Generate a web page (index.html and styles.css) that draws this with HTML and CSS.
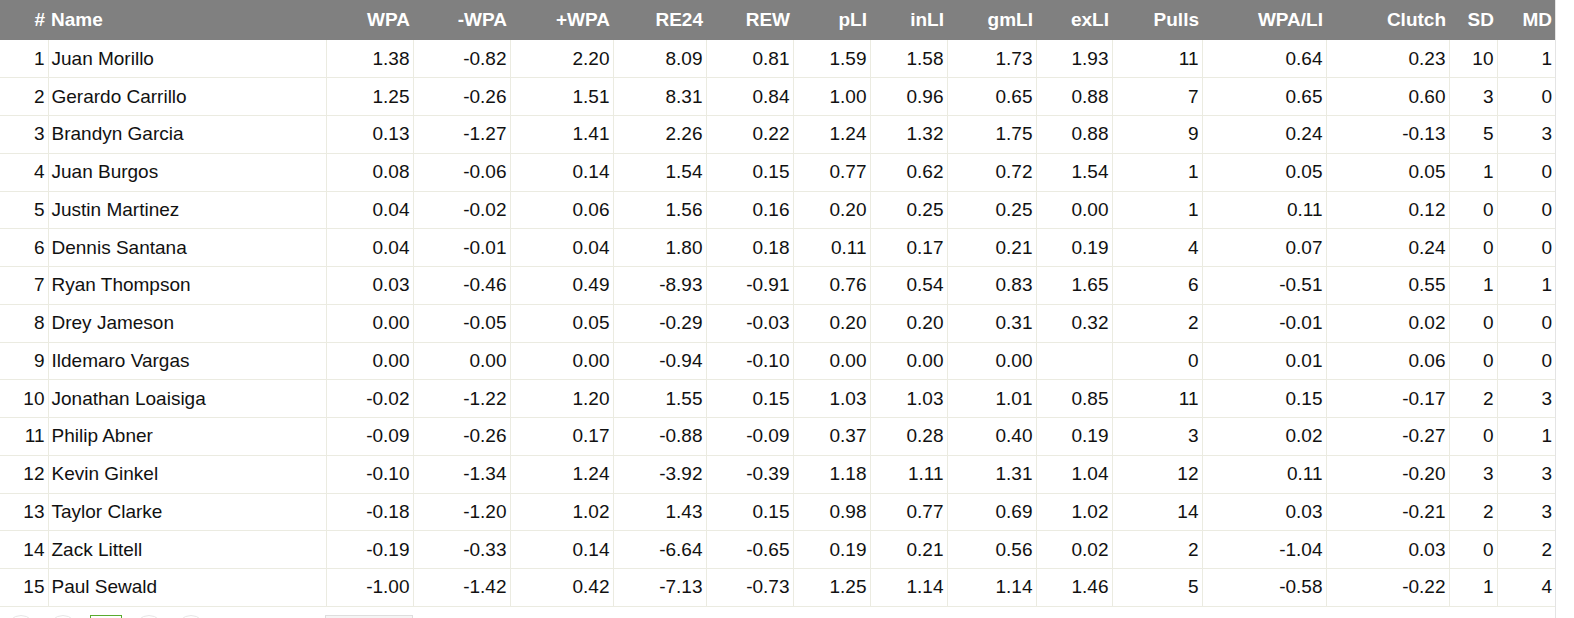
FILE: index.html
```html
<!DOCTYPE html>
<html lang="en">
<head>
<meta charset="utf-8">
<title>WPA table</title>
<link rel="stylesheet" href="styles.css">
</head>
<body>
<div class="wrap">
<table class="stats">
<colgroup>
<col style="width:48px"><col style="width:278px"><col style="width:87px"><col style="width:97px"><col style="width:103px"><col style="width:93px"><col style="width:87px"><col style="width:77px"><col style="width:77px"><col style="width:89px"><col style="width:76px"><col style="width:90px"><col style="width:124px"><col style="width:123px"><col style="width:48px"><col style="width:58px">
</colgroup>
<thead>
<tr><th>#</th><th class="name">Name</th><th>WPA</th><th>-WPA</th><th>+WPA</th><th>RE24</th><th>REW</th><th>pLI</th><th>inLI</th><th>gmLI</th><th>exLI</th><th>Pulls</th><th>WPA/LI</th><th>Clutch</th><th>SD</th><th>MD</th></tr>
</thead>
<tbody>
<tr><td>1</td><td class="name">Juan Morillo</td><td>1.38</td><td>-0.82</td><td>2.20</td><td>8.09</td><td>0.81</td><td>1.59</td><td>1.58</td><td>1.73</td><td>1.93</td><td>11</td><td>0.64</td><td>0.23</td><td>10</td><td>1</td></tr>
<tr><td>2</td><td class="name">Gerardo Carrillo</td><td>1.25</td><td>-0.26</td><td>1.51</td><td>8.31</td><td>0.84</td><td>1.00</td><td>0.96</td><td>0.65</td><td>0.88</td><td>7</td><td>0.65</td><td>0.60</td><td>3</td><td>0</td></tr>
<tr><td>3</td><td class="name">Brandyn Garcia</td><td>0.13</td><td>-1.27</td><td>1.41</td><td>2.26</td><td>0.22</td><td>1.24</td><td>1.32</td><td>1.75</td><td>0.88</td><td>9</td><td>0.24</td><td>-0.13</td><td>5</td><td>3</td></tr>
<tr><td>4</td><td class="name">Juan Burgos</td><td>0.08</td><td>-0.06</td><td>0.14</td><td>1.54</td><td>0.15</td><td>0.77</td><td>0.62</td><td>0.72</td><td>1.54</td><td>1</td><td>0.05</td><td>0.05</td><td>1</td><td>0</td></tr>
<tr><td>5</td><td class="name">Justin Martinez</td><td>0.04</td><td>-0.02</td><td>0.06</td><td>1.56</td><td>0.16</td><td>0.20</td><td>0.25</td><td>0.25</td><td>0.00</td><td>1</td><td>0.11</td><td>0.12</td><td>0</td><td>0</td></tr>
<tr><td>6</td><td class="name">Dennis Santana</td><td>0.04</td><td>-0.01</td><td>0.04</td><td>1.80</td><td>0.18</td><td>0.11</td><td>0.17</td><td>0.21</td><td>0.19</td><td>4</td><td>0.07</td><td>0.24</td><td>0</td><td>0</td></tr>
<tr><td>7</td><td class="name">Ryan Thompson</td><td>0.03</td><td>-0.46</td><td>0.49</td><td>-8.93</td><td>-0.91</td><td>0.76</td><td>0.54</td><td>0.83</td><td>1.65</td><td>6</td><td>-0.51</td><td>0.55</td><td>1</td><td>1</td></tr>
<tr><td>8</td><td class="name">Drey Jameson</td><td>0.00</td><td>-0.05</td><td>0.05</td><td>-0.29</td><td>-0.03</td><td>0.20</td><td>0.20</td><td>0.31</td><td>0.32</td><td>2</td><td>-0.01</td><td>0.02</td><td>0</td><td>0</td></tr>
<tr><td>9</td><td class="name">Ildemaro Vargas</td><td>0.00</td><td>0.00</td><td>0.00</td><td>-0.94</td><td>-0.10</td><td>0.00</td><td>0.00</td><td>0.00</td><td></td><td>0</td><td>0.01</td><td>0.06</td><td>0</td><td>0</td></tr>
<tr><td>10</td><td class="name">Jonathan Loaisiga</td><td>-0.02</td><td>-1.22</td><td>1.20</td><td>1.55</td><td>0.15</td><td>1.03</td><td>1.03</td><td>1.01</td><td>0.85</td><td>11</td><td>0.15</td><td>-0.17</td><td>2</td><td>3</td></tr>
<tr><td>11</td><td class="name">Philip Abner</td><td>-0.09</td><td>-0.26</td><td>0.17</td><td>-0.88</td><td>-0.09</td><td>0.37</td><td>0.28</td><td>0.40</td><td>0.19</td><td>3</td><td>0.02</td><td>-0.27</td><td>0</td><td>1</td></tr>
<tr><td>12</td><td class="name">Kevin Ginkel</td><td>-0.10</td><td>-1.34</td><td>1.24</td><td>-3.92</td><td>-0.39</td><td>1.18</td><td>1.11</td><td>1.31</td><td>1.04</td><td>12</td><td>0.11</td><td>-0.20</td><td>3</td><td>3</td></tr>
<tr><td>13</td><td class="name">Taylor Clarke</td><td>-0.18</td><td>-1.20</td><td>1.02</td><td>1.43</td><td>0.15</td><td>0.98</td><td>0.77</td><td>0.69</td><td>1.02</td><td>14</td><td>0.03</td><td>-0.21</td><td>2</td><td>3</td></tr>
<tr><td>14</td><td class="name">Zack Littell</td><td>-0.19</td><td>-0.33</td><td>0.14</td><td>-6.64</td><td>-0.65</td><td>0.19</td><td>0.21</td><td>0.56</td><td>0.02</td><td>2</td><td>-1.04</td><td>0.03</td><td>0</td><td>2</td></tr>
<tr><td>15</td><td class="name">Paul Sewald</td><td>-1.00</td><td>-1.42</td><td>0.42</td><td>-7.13</td><td>-0.73</td><td>1.25</td><td>1.14</td><td>1.14</td><td>1.46</td><td>5</td><td>-0.58</td><td>-0.22</td><td>1</td><td>4</td></tr>
</tbody>
</table>
<div class="pager">
<span class="pbtn"></span>
<span class="pbtn"></span>
<span class="pbtn current"></span>
<span class="pbtn"></span>
<span class="pbtn"></span>
<span class="psize"></span>
</div>
</div>
</body>
</html>
```
FILE: styles.css
```css
html, body {
  margin: 0;
  padding: 0;
  background: #ffffff;
}

body {
  font-family: "Liberation Sans", Arial, Helvetica, sans-serif;
  color: #111111;
}

.wrap {
  width: 1555px;
  border-right: 1px solid #e4e4e4;
  min-height: 618px;
}

.stats {
  table-layout: fixed;
  width: 1555px;
  border-collapse: collapse;
  font-size: 19px;
}

.stats th {
  background: #808080;
  color: #ffffff;
  font-weight: bold;
  height: 40px;
  padding: 0 3px;
  text-align: right;
  white-space: nowrap;
  vertical-align: middle;
  box-sizing: border-box;
}

.stats td {
  height: 37.75px;
  padding: 0 3px;
  text-align: right;
  white-space: nowrap;
  vertical-align: middle;
  border-right: 1px solid #ebebe1;
  border-bottom: 1px solid #ebebe1;
  box-sizing: border-box;
}

.stats td:last-child {
  border-right: none;
}

.stats th.name,
.stats td.name {
  text-align: left;
}

.pager {
  display: flex;
  align-items: flex-start;
  gap: 12px;
  padding: 8px 0 0 6px;
}

.pbtn {
  width: 30px;
  height: 30px;
  border: 1px solid #e6e6e6;
  border-radius: 50%;
  box-sizing: border-box;
  background: #ffffff;
}

.pbtn.current {
  width: 32px;
  border-radius: 0;
  border: 1px solid #5aaa2e;
}

.psize {
  width: 88px;
  height: 30px;
  margin-left: 107px;
  background: #f5f5f5;
  border: 1px solid #dedede;
  box-sizing: border-box;
}
```
